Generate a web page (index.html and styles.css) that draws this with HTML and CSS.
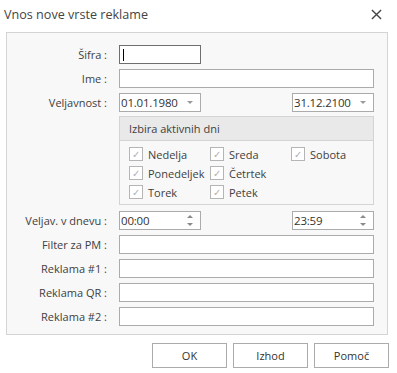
FILE: index.html
```html
<!DOCTYPE html>
<html>
<head>
<meta charset="utf-8">
<link rel="stylesheet" href="styles.css">
</head>
<body>
<div class="dialog">
  <div class="titlebar">
    <span class="title">Vnos nove vrste reklame</span>
    <svg class="close" width="12" height="12" viewBox="0 0 12 12"><path d="M1 1 L11 11 M11 1 L1 11" stroke="#444" stroke-width="1.5" fill="none"/></svg>
  </div>
  <div class="panel">
    <div class="row">
      <label class="lbl">Šifra :</label>
      <div class="input short focus"><span class="caret"></span></div>
    </div>
    <div class="row">
      <label class="lbl">Ime :</label>
      <div class="input wide"></div>
    </div>
    <div class="row split">
      <label class="lbl">Veljavnost :</label>
      <div class="input short combo"><span class="val">01.01.1980</span><span class="arrow"></span></div>
      <div class="input short combo"><span class="val">31.12.2100</span><span class="arrow"></span></div>
    </div>
    <div class="row grouprow">
      <div class="group">
        <div class="ghead">Izbira aktivnih dni</div>
        <div class="gbody">
          <div class="chk"><span class="box">✓</span>Nedelja</div>
          <div class="chk"><span class="box">✓</span>Sreda</div>
          <div class="chk"><span class="box">✓</span>Sobota</div>
          <div class="chk"><span class="box">✓</span>Ponedeljek</div>
          <div class="chk"><span class="box">✓</span>Četrtek</div>
          <div></div>
          <div class="chk"><span class="box">✓</span>Torek</div>
          <div class="chk"><span class="box">✓</span>Petek</div>
        </div>
      </div>
    </div>
    <div class="row split time">
      <label class="lbl">Veljav. v dnevu :</label>
      <div class="input short spin"><span class="val">00:00</span><span class="spinbtn"><span class="up"></span><span class="down"></span></span></div>
      <div class="input short spin"><span class="val">23:59</span><span class="spinbtn"><span class="up"></span><span class="down"></span></span></div>
    </div>
    <div class="row">
      <label class="lbl">Filter za PM :</label>
      <div class="input wide"></div>
    </div>
    <div class="row">
      <label class="lbl">Reklama #1 :</label>
      <div class="input wide"></div>
    </div>
    <div class="row">
      <label class="lbl">Reklama QR :</label>
      <div class="input wide"></div>
    </div>
    <div class="row">
      <label class="lbl">Reklama #2 :</label>
      <div class="input wide"></div>
    </div>
  </div>
  <div class="buttons">
    <button class="btn">OK</button>
    <button class="btn">Izhod</button>
    <button class="btn">Pomoč</button>
  </div>
</div>
</body>
</html>
```
FILE: styles.css
```css
* { box-sizing: border-box; }
html, body { margin: 0; padding: 0; background: #ffffff; }
body {
  font-family: "Open Sans", "Noto Sans", sans-serif;
  font-size: 11px;
  color: #3c3c3c;
  width: 397px;
  height: 373px;
  overflow: hidden;
}
.dialog { width: 397px; height: 373px; }
.titlebar {
  height: 32px;
  display: flex;
  align-items: center;
  justify-content: space-between;
  padding: 0 15px 4px 4px;
}
.title { font-size: 12.6px; color: #444; }
.close { display: block; margin-top: 1px; width: 11px; height: 11px; }
.panel {
  margin: 0 9px 0 6px;
  height: 303px;
  border: 1px solid #d4d4d4;
  background: #f8f8f8;
  padding: 12px 13px 0 0;
  display: flex;
  flex-direction: column;
  gap: 5px;
}
.row {
  display: flex;
  align-items: center;
  height: 19px;
}
.lbl {
  width: 112px;
  text-align: right;
  padding-right: 12px;
  white-space: nowrap;
  color: #404040;
}
.input {
  height: 19px;
  border: 1px solid #ababab;
  background: #fff;
  display: flex;
  align-items: center;
  position: relative;
}
.short { width: 82px; }
.wide { flex: 1; }
.focus { border-color: #6e6e6e; }
.caret { width: 1px; height: 12px; background: #000; margin-left: 3px; }
.split { justify-content: flex-start; }
.split .input + .input { margin-left: auto; }
.val { padding-left: 1px; color: #333; font-size: 11.5px; letter-spacing: -0.2px; }
.arrow {
  position: absolute;
  right: 7px;
  top: 7px;
  width: 0; height: 0;
  border-left: 3.5px solid transparent;
  border-right: 3.5px solid transparent;
  border-top: 3px solid #9a9a9a;
}
.spinbtn {
  position: absolute;
  right: 6px;
  top: 2px;
  width: 7px;
  height: 13px;
}
.up, .down {
  position: absolute;
  left: 0;
  width: 0; height: 0;
  border-left: 3px solid transparent;
  border-right: 3px solid transparent;
}
.up { top: 1px; border-bottom: 3px solid #8a8a8a; }
.down { bottom: 1px; border-top: 3px solid #8a8a8a; }
.grouprow { height: auto; padding-left: 112px; margin-top: -1px; }
.group {
  flex: 1;
  height: 89px;
  border: 1px solid #d4d4d4;
  background: #f8f8f8;
}
.ghead {
  height: 24px;
  background: #e9e9e9;
  border-bottom: 1px solid #d4d4d4;
  padding-left: 9px;
  display: flex;
  align-items: center;
  color: #404040;
}
.gbody {
  display: grid;
  grid-template-columns: 81px 81px 1fr;
  row-gap: 5px;
  padding: 6px 0 0 9px;
}
.chk {
  display: flex;
  align-items: center;
  height: 14px;
  white-space: nowrap;
  color: #404040;
}
.box {
  width: 14px; height: 14px;
  border: 1px solid #b5b5b5;
  background: #fff;
  color: #b0b0b0;
  font-size: 10px;
  line-height: 12px;
  text-align: center;
  margin-right: 5px;
  flex: none;
}
.time { margin-top: 1px; }
.buttons {
  display: flex;
  justify-content: flex-end;
  gap: 6px;
  padding: 8px 8px 0 0;
}
.btn {
  width: 75px;
  height: 25px;
  border: 1px solid #ababab;
  background: #fff;
  font-family: inherit;
  font-size: 11px;
  color: #333;
  padding: 0;
}
```
